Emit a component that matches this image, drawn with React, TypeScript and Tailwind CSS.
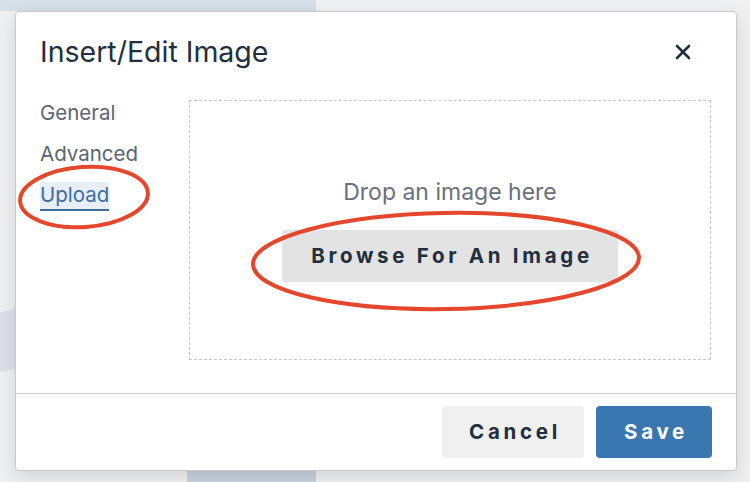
import { X } from 'lucide-react'

const tabs = ['General', 'Advanced', 'Upload']

function Annotations() {
  return (
    <svg
      className="pointer-events-none absolute inset-0 z-20"
      width={750}
      height={482}
      viewBox="0 0 750 482"
    >
      <ellipse
        cx={84}
        cy={197}
        rx={64}
        ry={30}
        fill="none"
        stroke="#e4472b"
        strokeWidth={4}
        transform="rotate(-4 84 197)"
      />
      <ellipse
        cx={446}
        cy={261}
        rx={193}
        ry={48}
        fill="none"
        stroke="#e4472b"
        strokeWidth={4}
        transform="rotate(-1 446 261)"
      />
    </svg>
  )
}

export default function App() {
  return (
    <div className="relative h-[482px] w-[750px] overflow-hidden bg-[#eff0f2] font-['Inter',sans-serif]">
      {/* blurred page behind the modal */}
      <div className="absolute left-0 top-0 h-[11px] w-[316px] bg-[#d6dee8]" />
      <div className="absolute left-0 top-[310px] h-[60px] w-[20px] -skew-y-12 bg-[#dae1ea]" />
      <div className="absolute bottom-0 left-[187px] h-[11px] w-[129px] bg-[#c9d2dd]" />

      <div className="relative z-10 ml-[15px] mt-[11px] flex h-[460px] w-[722px] flex-col rounded-[4px] border border-[#c8c8c8] bg-white shadow-[0_6px_18px_rgba(0,0,0,0.12)]">
        <header className="flex h-[80px] shrink-0 items-center justify-between pl-[24px] pr-[41px]">
          <h1 className="text-[28.5px] leading-none text-[#222f3e]">Insert/Edit Image</h1>
          <X className="h-[24px] w-[24px] text-[#222f3e]" strokeWidth={2.6} />
        </header>

        <section className="flex flex-1 pl-[24px] pr-[25px] pt-[8px]">
          <nav className="flex w-[149px] shrink-0 flex-col gap-[15px]">
            {tabs.map((tab) => (
              <div key={tab} className="flex">
                <span
                  className={
                    tab === 'Upload'
                      ? 'border-b-2 border-[#3c6f9f] bg-[#e8eef5] pb-[1px] text-[20.5px] leading-[26px] text-[#3c6f9f]'
                      : 'text-[20.5px] leading-[26px] text-[#5d6470]'
                  }
                >
                  {tab}
                </span>
              </div>
            ))}
          </nav>
          <div className="flex h-[260px] flex-1 flex-col items-center justify-center gap-[24px] border border-dashed border-[#c6c6c6]">
            <p className="text-[23px] leading-[28px] text-[#6a7079]">Drop an image here</p>
            <button className="h-[52px] w-[336px] rounded-[3px] bg-[#e3e3e3] pl-[4px] text-[20.5px] font-bold tracking-[3.7px] text-[#222f3e]">
              Browse For An Image
            </button>
          </div>
        </section>

        <footer className="flex h-[77px] shrink-0 items-center justify-end gap-[12px] border-t border-[#cccccc] pr-[24px]">
          <button className="h-[52px] w-[142px] rounded-[4px] bg-[#f0f0f0] pl-[4px] text-[20.5px] font-bold tracking-[3.7px] text-[#222f3e]">
            Cancel
          </button>
          <button className="h-[52px] w-[116px] rounded-[4px] bg-[#3a77b0] pl-[4px] text-[20.5px] font-bold tracking-[3.7px] text-white">
            Save
          </button>
        </footer>
      </div>

      <Annotations />
    </div>
  )
}
